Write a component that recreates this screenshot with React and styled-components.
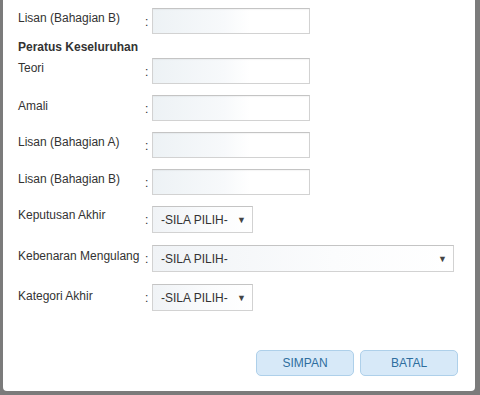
import React from "react";
import styled, { createGlobalStyle } from "styled-components";

const GlobalStyle = createGlobalStyle`
  html, body {
    margin: 0;
    padding: 0;
    background: #7b7b7b;
    font-family: "Liberation Sans", Arial, sans-serif;
  }
`;

const Panel = styled.div`
  box-sizing: border-box;
  width: 472px;
  height: 391px;
  margin-left: 3px;
  padding: 8px 17px 0 15px;
  background: #fff;
  border-radius: 0 0 4px 4px;
  color: #333;
  font-size: 12px;
`;

const Row = styled.div`
  display: flex;
  align-items: flex-start;
  margin-bottom: ${(p) => p.$gap ?? 11}px;
`;

const Label = styled.div`
  width: 127px;
  padding-top: ${(p) => p.$offset ?? 3}px;
  line-height: 14px;
  white-space: nowrap;
`;

const Colon = styled.span`
  width: 7px;
  padding-top: 7px;
  line-height: 14px;
`;

const Heading = styled.div`
  height: 24px;
  padding-top: 5px;
  box-sizing: border-box;
  font-weight: bold;
  line-height: 16px;
`;

const TextInput = styled.div`
  box-sizing: border-box;
  width: 158px;
  height: 26px;
  border: 1px solid #d2d2d2;
  border-top-color: #c4c4c4;
  background: linear-gradient(to right, #edf2f5 0%, #f7f9fb 45%, #ffffff 62%);
  box-shadow: inset 0 1px 1px rgba(0, 0, 0, 0.04);
`;

const Select = styled.div`
  box-sizing: border-box;
  display: flex;
  align-items: center;
  justify-content: space-between;
  width: ${(p) => p.$width}px;
  height: 27px;
  padding: 0 6px 0 8px;
  border: 1px solid #d2d2d2;
  border-top-color: #c4c4c4;
  background: linear-gradient(to right, #f0f3f6 0%, #fbfcfd 60%, #ffffff 100%);
  color: #333;
  font-size: 12px;
`;

const Arrow = styled.span`
  font-size: 9px;
  color: #444;
`;

const Footer = styled.div`
  display: flex;
  justify-content: flex-end;
  gap: 6px;
  margin-top: 39px;
`;

const Button = styled.button`
  box-sizing: border-box;
  width: 98px;
  height: 26px;
  border: 1px solid #aed0ea;
  border-radius: 5px;
  background: #d7e9f8;
  color: #2e6e9e;
  font-family: "Liberation Sans", Arial, sans-serif;
  font-size: 12px;
  padding: 0;
`;

const inputs = [
  { label: "Teori", offset: 3 },
  { label: "Amali", offset: 4 },
  { label: "Lisan (Bahagian A)", offset: 3 },
  { label: "Lisan (Bahagian B)", offset: 3 },
];

export default function App() {
  return (
    <>
      <GlobalStyle />
      <Panel>
        <Row $gap={0}>
          <Label $offset={3}>Lisan (Bahagian B)</Label>
          <Colon>:</Colon>
          <TextInput />
        </Row>
        <Heading>Peratus Keseluruhan</Heading>
        {inputs.map((f) => (
          <Row key={f.label}>
            <Label $offset={f.offset}>{f.label}</Label>
            <Colon>:</Colon>
            <TextInput />
          </Row>
        ))}
        <Row $gap={12}>
          <Label $offset={2}>Keputusan Akhir</Label>
          <Colon>:</Colon>
          <Select $width={101}>
            -SILA PILIH-<Arrow>▼</Arrow>
          </Select>
        </Row>
        <Row $gap={12}>
          <Label $offset={4}>Kebenaran Mengulang</Label>
          <Colon>:</Colon>
          <Select $width={302}>
            -SILA PILIH-<Arrow>▼</Arrow>
          </Select>
        </Row>
        <Row $gap={0}>
          <Label $offset={5}>Kategori Akhir</Label>
          <Colon>:</Colon>
          <Select $width={101}>
            -SILA PILIH-<Arrow>▼</Arrow>
          </Select>
        </Row>
        <Footer>
          <Button>SIMPAN</Button>
          <Button>BATAL</Button>
        </Footer>
      </Panel>
    </>
  );
}
